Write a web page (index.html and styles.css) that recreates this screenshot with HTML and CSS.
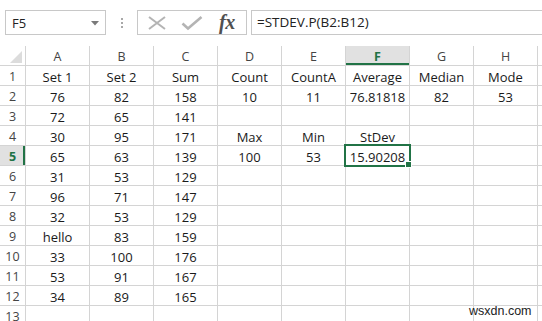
FILE: index.html
```html
<!DOCTYPE html>
<html>
<head>
<meta charset="utf-8">
<link rel="stylesheet" href="styles.css">
</head>
<body>
<div class="toolbar">
  <div class="namebox"><span>F5</span><svg class="drop" width="8" height="5" viewBox="0 0 8 5"><path d="M0 0H8L4 4.5Z" fill="#7a7a7a"/></svg></div>
  <div class="sep"><i></i><i></i><i></i></div>
  <div class="fxbox">
    <svg class="ico" width="20" height="16" viewBox="0 0 20 16"><path d="M2 2L18 14M18 2L2 14" stroke="#b4b4b4" stroke-width="2" fill="none"/></svg>
    <svg class="ico" width="22" height="16" viewBox="0 0 22 16"><path d="M1.5 8.5L7 13.5L20.5 2" stroke="#b4b4b4" stroke-width="2.6" fill="none"/></svg>
    <span class="fx">fx</span>
  </div>
  <div class="formula">=STDEV.P(B2:B12)</div>
</div>
<div class="grid">
  <div class="corner"><svg width="25" height="19" viewBox="0 0 25 19"><path d="M10 17H22V5Z" fill="#dcdcdc"/></svg></div>
  <div class="ch">A</div><div class="ch">B</div><div class="ch">C</div><div class="ch">D</div><div class="ch">E</div><div class="ch sel">F</div><div class="ch">G</div><div class="ch">H</div><div class="ch"></div>

  <div class="rh">1</div><div class="c">Set 1</div><div class="c">Set 2</div><div class="c">Sum</div><div class="c">Count</div><div class="c">CountA</div><div class="c">Average</div><div class="c">Median</div><div class="c">Mode</div><div class="c"></div>
  <div class="rh">2</div><div class="c">76</div><div class="c">82</div><div class="c">158</div><div class="c">10</div><div class="c">11</div><div class="c">76.81818</div><div class="c">82</div><div class="c">53</div><div class="c"></div>
  <div class="rh">3</div><div class="c">72</div><div class="c">65</div><div class="c">141</div><div class="c"></div><div class="c"></div><div class="c"></div><div class="c"></div><div class="c"></div><div class="c"></div>
  <div class="rh">4</div><div class="c">30</div><div class="c">95</div><div class="c">171</div><div class="c">Max</div><div class="c">Min</div><div class="c">StDev</div><div class="c"></div><div class="c"></div><div class="c"></div>
  <div class="rh sel">5</div><div class="c">65</div><div class="c">63</div><div class="c">139</div><div class="c">100</div><div class="c">53</div><div class="c active">15.90208<span class="handle"></span></div><div class="c"></div><div class="c"></div><div class="c"></div>
  <div class="rh">6</div><div class="c">31</div><div class="c">53</div><div class="c">129</div><div class="c"></div><div class="c"></div><div class="c"></div><div class="c"></div><div class="c"></div><div class="c"></div>
  <div class="rh">7</div><div class="c">96</div><div class="c">71</div><div class="c">147</div><div class="c"></div><div class="c"></div><div class="c"></div><div class="c"></div><div class="c"></div><div class="c"></div>
  <div class="rh">8</div><div class="c">32</div><div class="c">53</div><div class="c">129</div><div class="c"></div><div class="c"></div><div class="c"></div><div class="c"></div><div class="c"></div><div class="c"></div>
  <div class="rh">9</div><div class="c">hello</div><div class="c">83</div><div class="c">159</div><div class="c"></div><div class="c"></div><div class="c"></div><div class="c"></div><div class="c"></div><div class="c"></div>
  <div class="rh">10</div><div class="c">33</div><div class="c">100</div><div class="c">176</div><div class="c"></div><div class="c"></div><div class="c"></div><div class="c"></div><div class="c"></div><div class="c"></div>
  <div class="rh">11</div><div class="c">53</div><div class="c">91</div><div class="c">167</div><div class="c"></div><div class="c"></div><div class="c"></div><div class="c"></div><div class="c"></div><div class="c"></div>
  <div class="rh">12</div><div class="c">34</div><div class="c">89</div><div class="c">165</div><div class="c"></div><div class="c"></div><div class="c"></div><div class="c"></div><div class="c"></div><div class="c"></div>
  <div class="rh">13</div><div class="c"></div><div class="c"></div><div class="c"></div><div class="c"></div><div class="c"></div><div class="c"></div><div class="c"></div><div class="c"></div><div class="c"></div>
</div>
<div class="watermark">wsxdn.com</div>
</body>
</html>
```
FILE: styles.css
```css
html, body {
  margin: 0;
  padding: 0;
  background: #fff;
  width: 542px;
  height: 321px;
  overflow: hidden;
  position: relative;
}
body {
  font-family: "Open Sans", "Liberation Sans", sans-serif;
  color: #1a1a1a;
}
.toolbar {
  height: 46px;
  box-sizing: border-box;
  padding: 10px 0 0 5px;
  display: flex;
  align-items: flex-start;
}
.namebox {
  width: 101px;
  height: 25px;
  box-sizing: border-box;
  border: 1px solid #c8c8c8;
  display: flex;
  align-items: center;
  justify-content: space-between;
  padding: 0 6px 0 6px;
  font-size: 13px;
  color: #222;
}
.namebox .drop { margin-top: 1px; }
.sep {
  width: 31px;
  height: 25px;
  display: flex;
  flex-direction: column;
  align-items: center;
  justify-content: center;
  gap: 2px;
}
.sep i {
  display: block;
  width: 2px;
  height: 2px;
  background: #a8a8a8;
}
.fxbox {
  width: 110px;
  height: 25px;
  box-sizing: border-box;
  border: 1px solid #c8c8c8;
  display: flex;
  align-items: center;
  padding: 0 0 0 9px;
  gap: 15px;
}
.fxbox .ico:nth-child(2) { margin-left: -1px; }
.fx {
  font-family: "Liberation Serif", serif;
  font-style: italic;
  font-weight: bold;
  font-size: 20px;
  color: #505050;
  letter-spacing: -0.5px;
  margin-left: 1px;
  line-height: 1;
  margin-top: -2px;
}
.formula {
  flex: 1;
  height: 25px;
  box-sizing: border-box;
  border: 1px solid #c8c8c8;
  border-right: none;
  margin-left: 4px;
  padding-left: 5px;
  font-size: 13.5px;
  line-height: 23px;
  color: #222;
}
.grid {
  display: grid;
  grid-template-columns: 25px repeat(8, 63px) 4px;
  grid-auto-rows: 19px;
  column-gap: 1px;
  row-gap: 1px;
  background: #d4d4d4;
}
.grid > div {
  background: #fff;
  display: flex;
  align-items: center;
  justify-content: center;
  font-size: 13px;
  white-space: nowrap;
  overflow: visible;
}
.grid > .corner { align-items: flex-end; justify-content: flex-start; }
.grid > .ch, .grid > .rh {
  color: #444;
  font-size: 12.5px;
}
.grid > .ch { padding-top: 1px; }
.grid > .c { padding-top: 3px; box-sizing: border-box; }
.grid > .rh { padding-top: 2px; box-sizing: border-box; }
.grid > .ch.sel {
  background: #e1e1e1;
  color: #217346;
  font-weight: bold;
  box-shadow: inset 0 -2px 0 #217346;
}
.grid > .rh.sel {
  background: #e1e1e1;
  color: #217346;
  font-weight: bold;
  box-shadow: inset -2px 0 0 #217346;
}
.grid > .active { position: relative; }
.active::after {
  content: "";
  position: absolute;
  left: -2px;
  top: -2px;
  right: -2px;
  bottom: -2px;
  border: 2px solid #217346;
  box-sizing: border-box;
}
.handle {
  position: absolute;
  right: -3px;
  bottom: -3px;
  width: 5px;
  height: 5px;
  background: #217346;
  border: 1px solid #fff;
  z-index: 2;
}
.watermark {
  position: absolute;
  left: 469px;
  top: 304px;
  font-family: "Liberation Sans", Arial, sans-serif;
  font-size: 12.5px;
  color: #222;
  background: transparent;
}
```
